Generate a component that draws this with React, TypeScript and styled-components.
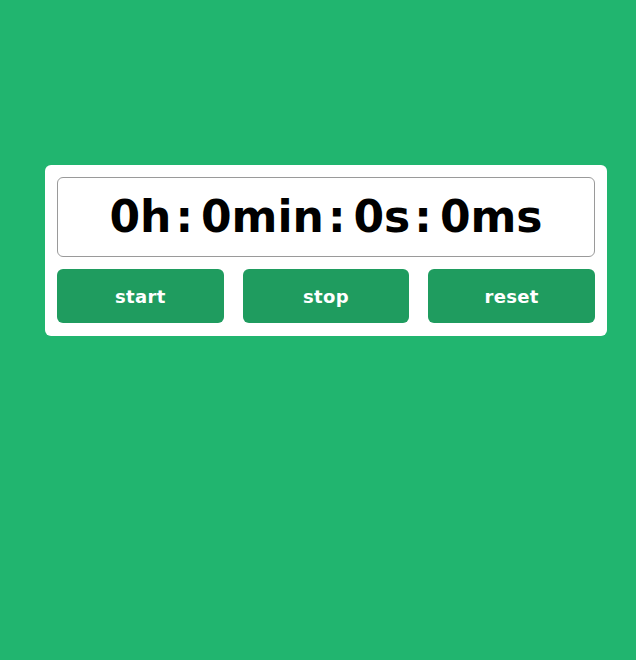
import React from "react";
import styled, { createGlobalStyle } from "styled-components";

const Global = createGlobalStyle`
  html, body { margin: 0; padding: 0; }
  body {
    background: #21b56f;
    font-family: "DejaVu Sans", "Noto Sans", sans-serif;
  }
`;

const Page = styled.div`
  width: 636px;
  height: 660px;
  padding-top: 165px;
  padding-left: 45px;
  box-sizing: border-box;
`;

const Card = styled.div`
  width: 562px;
  box-sizing: border-box;
  background: #ffffff;
  border-radius: 6px;
  padding: 12px 12px 13px;
  display: flex;
  flex-direction: column;
  gap: 12px;
`;

const Display = styled.div`
  height: 80px;
  box-sizing: border-box;
  border: 1px solid #9a9a9a;
  border-radius: 6px;
  display: flex;
  align-items: center;
  justify-content: center;
  font-family: "DejaVu Sans", sans-serif;
  font-weight: 700;
  font-size: 44px;
  color: #000;
  padding-bottom: 1px;
`;

const Part = styled.span`
  white-space: pre;
`;

const Sep = styled.span`
  margin: 0 8px 0 4px;
`;

const Buttons = styled.div`
  display: grid;
  grid-template-columns: repeat(3, 1fr);
  gap: 19px;
`;

const Button = styled.button`
  height: 54px;
  border: none;
  border-radius: 6px;
  background: #1f9c5f;
  color: #ffffff;
  font-family: "DejaVu Sans", sans-serif;
  font-weight: 700;
  font-size: 18px;
  cursor: pointer;
  letter-spacing: 0.3px;
`;

export default function App() {
  const parts = ["0h", "0min", "0s", "0ms"];
  return (
    <>
      <Global />
      <Page>
        <Card>
          <Display>
            {parts.map((p, i) => (
              <React.Fragment key={p}>
                <Part>{p}</Part>
                {i < parts.length - 1 && <Sep>:</Sep>}
              </React.Fragment>
            ))}
          </Display>
          <Buttons>
            <Button>start</Button>
            <Button>stop</Button>
            <Button>reset</Button>
          </Buttons>
        </Card>
      </Page>
    </>
  );
}
